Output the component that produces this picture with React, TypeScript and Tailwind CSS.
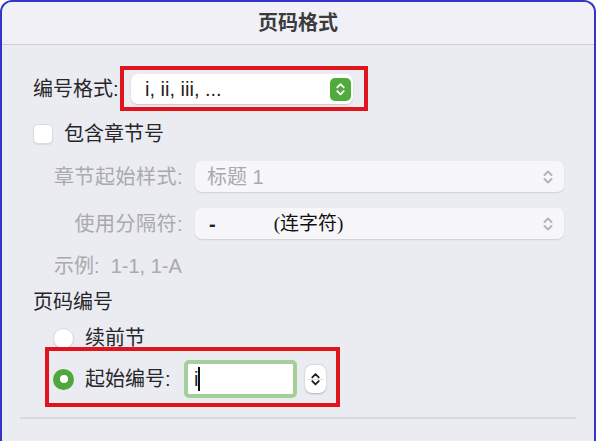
import React from 'react';

const sans = "font-['Liberation_Sans','Noto_Sans_CJK_SC',sans-serif]";

function Chevrons({ color, size = 12 }: { color: string; size?: number }) {
  return (
    <svg width={size} height={size * 1.5} viewBox="0 0 12 18" fill="none">
      <path d="M2.5 7 L6 3.5 L9.5 7" stroke={color} strokeWidth="2" strokeLinecap="round" strokeLinejoin="round" />
      <path d="M2.5 11 L6 14.5 L9.5 11" stroke={color} strokeWidth="2" strokeLinecap="round" strokeLinejoin="round" />
    </svg>
  );
}

function Radio({ checked }: { checked?: boolean }) {
  if (checked) {
    return (
      <div className="w-[21px] h-[21px] rounded-full bg-[#4fa83d] flex items-center justify-center shrink-0">
        <div className="w-[8px] h-[8px] rounded-full bg-white" />
      </div>
    );
  }
  return (
    <div className="w-[21px] h-[21px] rounded-full bg-white border border-[#d9d9e0] shadow-[0_1px_1px_rgba(0,0,0,0.08)] shrink-0" />
  );
}

function DisabledPopup({ children }: { children: React.ReactNode }) {
  return (
    <div className="w-[369px] h-[31px] rounded-[7px] bg-[#f7f7fa] shadow-[0_1px_1.5px_rgba(0,0,0,0.12)] flex items-center justify-between pl-[12px] pr-[10px]">
      <div className="flex items-center">{children}</div>
      <Chevrons color="#b4b4ba" />
    </div>
  );
}

export default function App() {
  return (
    <div className={`w-[596px] h-[441px] bg-white overflow-hidden ${sans}`}>
      <div className="h-full rounded-t-[12px] border-2 border-b-0 border-[#3434c8] bg-[#ebebf2] flex flex-col">
        {/* Title bar */}
        <div className="h-[43px] shrink-0 rounded-t-[10px] bg-[#f0f0f6] border-b border-[#cdcdd4] flex items-center justify-center">
          <span className="text-[20px] font-bold text-[#3b3b3d] leading-none">页码格式</span>
        </div>

        <div className="flex flex-col pl-[31px] text-[20px] leading-[24px] text-[#262628]">
          {/* 编号格式 */}
          <div className="flex items-center mt-[21px]">
            <span className="w-[87px] whitespace-nowrap">编号格式:</span>
            <div className="border-[4px] border-[#e0141c] pt-[4px] pb-[3px] pl-[7px] pr-[11px]">
              <div className="w-[222px] h-[30px] rounded-[7px] bg-white shadow-[0_1px_1.5px_rgba(0,0,0,0.15)] flex items-center justify-between pl-[14px] pr-[2px]">
                <span className="text-[#1f1f21]">i, ii, iii, ...</span>
                <div className="w-[21px] h-[23px] rounded-[5px] bg-[#4fab3c] flex items-center justify-center">
                  <Chevrons color="#ffffff" size={11} />
                </div>
              </div>
            </div>
          </div>

          {/* 包含章节号 */}
          <div className="flex items-center h-[20px] mt-[13px]">
            <div className="w-[20px] h-[20px] rounded-[5px] bg-white border border-[#dadae0] shadow-[0_1px_1px_rgba(0,0,0,0.08)]" />
            <span className="ml-[11px]">包含章节号</span>
          </div>

          {/* 章节起始样式 */}
          <div className="flex items-center mt-[17px]">
            <span className="w-[150px] text-right text-[#a9a9ae] whitespace-nowrap tracking-[0.5px]">章节起始样式:</span>
            <div className="ml-[12px]">
              <DisabledPopup>
                <span className="text-[#a9a9ae]">标题 1</span>
              </DisabledPopup>
            </div>
          </div>

          {/* 使用分隔符 */}
          <div className="flex items-center mt-[16px]">
            <span className="w-[150px] text-right text-[#a9a9ae] whitespace-nowrap tracking-[0.5px]">使用分隔符:</span>
            <div className="ml-[12px]">
              <DisabledPopup>
                <span className="text-[#222] font-bold ml-[2px]">-</span>
                <span className="ml-[58px] text-[#111] font-['Liberation_Serif','Noto_Sans_CJK_SC',serif] text-[19px]">(连字符)</span>
              </DisabledPopup>
            </div>
          </div>

          {/* 示例 */}
          <div className="mt-[15px] pl-[21px] text-[#a9a9ae] whitespace-nowrap">示例:&nbsp; 1-1, 1-A</div>

          {/* 页码编号 */}
          <div className="mt-[12px] text-[#262628]">页码编号</div>

          {/* 续前节 */}
          <div className="flex items-center h-[20px] mt-[14px] pl-[20px]">
            <Radio />
            <span className="ml-[11px]">续前节</span>
          </div>

          {/* 起始编号 */}
          <div className="flex mt-[-1px] ml-[12px]">
            <div className="h-[60px] border-[4px] border-[#e0141c] flex items-center pl-[4px] pr-[10px] pt-[4px]">
              <Radio checked />
              <span className="ml-[11px] w-[91px] whitespace-nowrap shrink-0">起始编号:</span>
              <div className="ml-[8px] w-[113px] h-[38px] rounded-[5px] border-[4px] border-[#a3cf98] bg-white flex items-center pl-[6px]">
                <span className="text-[#1f1f21]">i</span>
                <div className="w-[2px] h-[24px] bg-[#111]" />
              </div>
              <div className="ml-[8px] w-[21px] h-[28px] rounded-[7px] bg-white shadow-[0_0.5px_2px_rgba(0,0,0,0.25)] flex flex-col items-center justify-center relative">
                <div className="absolute left-[2px] right-[2px] top-1/2 h-px bg-[#e2e2e6]" />
                <Chevrons color="#1e1e20" size={11} />
              </div>
            </div>
          </div>
        </div>

        {/* Separator */}
        <div className="mt-[10px] mx-[18px] h-[2px] bg-[#d8d8de]" />
      </div>
    </div>
  );
}
